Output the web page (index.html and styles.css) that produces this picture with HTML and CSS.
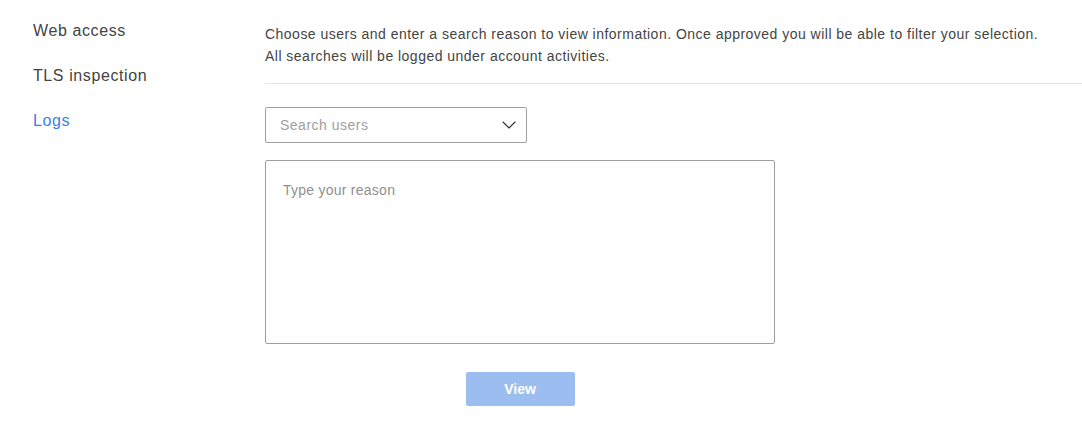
FILE: index.html
```html
<!DOCTYPE html>
<html lang="en">
<head>
<meta charset="utf-8">
<title>Logs</title>
<link rel="stylesheet" href="styles.css">
</head>
<body>
<div class="layout">
  <nav class="sidebar">
    <a class="nav-item" href="#">Web access</a>
    <a class="nav-item" href="#">TLS inspection</a>
    <a class="nav-item active" href="#">Logs</a>
  </nav>
  <main class="main">
    <p class="intro">Choose users and enter a search reason to view information. Once approved you will be able to filter your selection.<br>All searches will be logged under account activities.</p>
    <hr class="divider">
    <div class="form">
      <div class="select">
        <span class="select-placeholder">Search users</span>
        <svg class="chevron" width="14" height="8" viewBox="0 0 14 8" aria-hidden="true"><path d="M1 1l6 6 6-6" fill="none" stroke="#333" stroke-width="1.1" stroke-linecap="round" stroke-linejoin="round"/></svg>
      </div>
      <textarea class="reason" placeholder="Type your reason"></textarea>
      <div class="actions">
        <button class="btn-view" type="button">View</button>
      </div>
    </div>
  </main>
</div>
</body>
</html>
```
FILE: styles.css
```css
* { box-sizing: border-box; }
html, body { margin: 0; padding: 0; background: #fff; }
body { font-family: "Liberation Sans", Arial, sans-serif; color: #444; }

.layout { display: flex; }

.sidebar {
  width: 265px;
  flex: none;
  display: flex;
  flex-direction: column;
  gap: 25px;
  padding: 21px 0 0 33px;
}
.nav-item {
  font-size: 16px;
  line-height: 20px;
  letter-spacing: 0.6px;
  color: #444;
  text-decoration: none;
}
.nav-item.active { color: #3a7fe6; }

.main {
  flex: 1;
  padding-top: 23px;
}
.intro {
  margin: 0;
  font-size: 14px;
  line-height: 22px;
  letter-spacing: 0.48px;
  color: #444;
}
.divider {
  margin: 16px 0 0;
  border: 0;
  border-top: 1px solid #e4e4ea;
  height: 0;
}
.form {
  width: 510px;
  padding-top: 23px;
  display: flex;
  flex-direction: column;
}
.select {
  width: 262px;
  height: 36px;
  border: 1px solid #a0a0a0;
  border-radius: 2px;
  display: flex;
  align-items: center;
  justify-content: space-between;
  padding: 0 10px 0 14px;
}
.select-placeholder { font-size: 14px; letter-spacing: 0.5px; color: #a0a0a0; }
.chevron { display: block; }
.reason {
  margin-top: 17px;
  width: 510px;
  height: 184px;
  border: 1px solid #a0a0a0;
  border-radius: 2px;
  padding: 21px 17px;
  font-family: inherit;
  font-size: 14px;
  letter-spacing: 0.25px;
  color: #444;
  resize: none;
  outline: none;
}
.reason::placeholder { color: #8f8f8f; }
.actions {
  margin-top: 28px;
  display: flex;
  justify-content: center;
}
.btn-view {
  width: 109px;
  height: 34px;
  border: 0;
  border-radius: 2px;
  background: #9bbdf0;
  color: #fff;
  font-family: inherit;
  font-size: 14px;
  font-weight: bold;
}
```
